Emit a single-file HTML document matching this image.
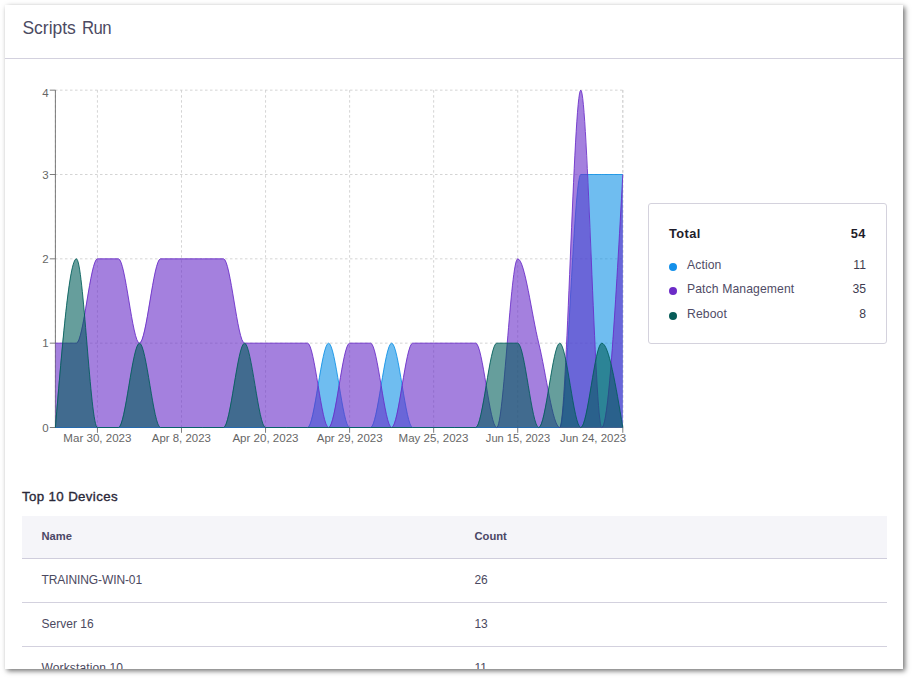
<!DOCTYPE html>
<html lang="en"><head><meta charset="utf-8"><title>Scripts Run</title>
<style>
*{box-sizing:border-box}
html,body{margin:0;padding:0;background:#fff;width:912px;height:678px;overflow:hidden}
body{font-family:"Liberation Sans",sans-serif;color:#4a4660;position:relative}
.card{position:absolute;left:5px;top:5px;width:898px;height:664px;background:#fff;box-shadow:2px 2px 5px rgba(0,0,0,.56);overflow:hidden}
.title{position:absolute;left:17.4px;top:13.4px;font-size:17.5px;line-height:20px;color:#4c4a62;font-weight:400;white-space:nowrap}
.title .w2{display:inline-block;transform:scaleX(.955);transform-origin:0 50%;letter-spacing:-.6px;margin-left:1px}
.hr{position:absolute;left:0;top:53px;width:898px;height:1px;background:#d3d1de}
svg.chart{position:absolute;left:-5px;top:-5px}
svg.chart text{font-family:"Liberation Sans",sans-serif;font-size:11.5px}
.legend{position:absolute;left:643px;top:198px;width:239px;height:141px;border:1px solid #d4d2dd;border-radius:3px;background:#fff}
.legend .row{position:absolute;left:0;width:100%;height:16px;line-height:16px;font-size:12.2px;letter-spacing:.1px;color:#504c66;white-space:nowrap}
.legend .row .lab{position:absolute;left:38px;top:0}
.legend .row .val{position:absolute;right:19.8px;top:0;text-align:right;color:#3e3b50}
.legend .row .dot{position:absolute;left:20px;top:5.5px;width:8px;height:8px;border-radius:50%}
.legend .tot{font-size:12.8px;letter-spacing:.4px;font-weight:700;color:#1f1d2b}
.legend .tot .lab{left:20px}
.legend .tot .val{color:#1f1d2b;right:20.2px}
h3{position:absolute;left:17px;top:484px;margin:0;font-size:13.3px;line-height:16px;font-weight:400;-webkit-text-stroke:.35px #2a2838;color:#2a2838;letter-spacing:.36px;white-space:nowrap}
.thead{position:absolute;left:17px;top:511px;width:865px;height:43px;background:#f5f5f9;border-bottom:1px solid #cfcddc}
.thead span,.tr span{position:absolute;white-space:nowrap}
.thead span{top:13px;font-size:11.2px;line-height:14px;font-weight:700;color:#4b4766}
.tr{position:absolute;left:17px;width:865px;height:44px;border-bottom:1px solid #d3d1de}
.tr span{top:13px;font-size:12px;line-height:16px;letter-spacing:-.1px;color:#4b4960}
.c1{left:19.5px}.c2{left:452.5px}
</style></head><body>
<div class="card">
<div class="title"><span class="w1">Scripts</span> <span class="w2">Run</span></div>
<div class="hr"></div>
<svg class="chart" width="912" height="678" viewBox="0 0 912 678">
<g stroke="#ccc" stroke-width="0.85" stroke-dasharray="2.5 2.5" fill="none"><line x1="55.0" y1="427.50" x2="622.8" y2="427.50"/><line x1="55.0" y1="343.17" x2="622.8" y2="343.17"/><line x1="55.0" y1="258.84" x2="622.8" y2="258.84"/><line x1="55.0" y1="174.50" x2="622.8" y2="174.50"/><line x1="55.0" y1="90.17" x2="622.8" y2="90.17"/><line x1="55.40" y1="90.17" x2="55.40" y2="427.5"/><line x1="97.43" y1="90.17" x2="97.43" y2="427.5"/><line x1="181.49" y1="90.17" x2="181.49" y2="427.5"/><line x1="265.55" y1="90.17" x2="265.55" y2="427.5"/><line x1="349.61" y1="90.17" x2="349.61" y2="427.5"/><line x1="433.67" y1="90.17" x2="433.67" y2="427.5"/><line x1="517.73" y1="90.17" x2="517.73" y2="427.5"/><line x1="622.80" y1="90.17" x2="622.80" y2="427.5"/><line x1="622.80" y1="90.17" x2="622.80" y2="427.5"/></g>
<g stroke="#666" stroke-width="0.85" fill="none"><line x1="55.4" y1="427.5" x2="622.8" y2="427.5"/><line x1="55.4" y1="90.17" x2="55.4" y2="427.5"/><line x1="97.43" y1="427.5" x2="97.43" y2="432.8"/><line x1="181.49" y1="427.5" x2="181.49" y2="432.8"/><line x1="265.55" y1="427.5" x2="265.55" y2="432.8"/><line x1="349.61" y1="427.5" x2="349.61" y2="432.8"/><line x1="433.67" y1="427.5" x2="433.67" y2="432.8"/><line x1="517.73" y1="427.5" x2="517.73" y2="432.8"/><line x1="622.80" y1="427.5" x2="622.80" y2="432.8"/><line x1="49.8" y1="427.50" x2="55.4" y2="427.50"/><line x1="49.8" y1="343.17" x2="55.4" y2="343.17"/><line x1="49.8" y1="258.84" x2="55.4" y2="258.84"/><line x1="49.8" y1="174.50" x2="55.4" y2="174.50"/><line x1="49.8" y1="90.17" x2="55.4" y2="90.17"/></g>
<g class="ticks" fill="#666" stroke="none"><text x="63.35" y="441.6" textLength="68.1" lengthAdjust="spacingAndGlyphs">Mar 30, 2023</text><text x="151.85" y="441.6" textLength="59.0" lengthAdjust="spacingAndGlyphs">Apr 8, 2023</text><text x="232.40" y="441.6" textLength="66.1" lengthAdjust="spacingAndGlyphs">Apr 20, 2023</text><text x="316.80" y="441.6" textLength="65.8" lengthAdjust="spacingAndGlyphs">Apr 29, 2023</text><text x="398.55" y="441.6" textLength="69.9" lengthAdjust="spacingAndGlyphs">May 25, 2023</text><text x="485.85" y="441.6" textLength="64.3" lengthAdjust="spacingAndGlyphs">Jun 15, 2023</text><text x="560.00" y="441.6" textLength="66.2" lengthAdjust="spacingAndGlyphs">Jun 24, 2023</text><text x="48.6" y="431.60" text-anchor="end">0</text><text x="48.6" y="347.27" text-anchor="end">1</text><text x="48.6" y="262.94" text-anchor="end">2</text><text x="48.6" y="178.60" text-anchor="end">3</text><text x="48.6" y="97.27" text-anchor="end">4</text></g>
<path d="M55.40,427.50C62.40,427.50,69.41,427.50,76.41,427.50C83.42,427.50,90.42,427.50,97.43,427.50C104.43,427.50,111.44,427.50,118.44,427.50C125.45,427.50,132.45,427.50,139.46,427.50C146.46,427.50,153.47,427.50,160.47,427.50C167.48,427.50,174.48,427.50,181.49,427.50C188.49,427.50,195.50,427.50,202.50,427.50C209.51,427.50,216.51,427.50,223.52,427.50C230.52,427.50,237.53,427.50,244.53,427.50C251.54,427.50,258.54,427.50,265.55,427.50C272.55,427.50,279.56,427.50,286.56,427.50C293.57,427.50,300.57,427.50,307.58,427.50C314.58,427.50,321.59,343.17,328.59,343.17C335.60,343.17,342.60,427.50,349.61,427.50C356.61,427.50,363.62,427.50,370.62,427.50C377.63,427.50,384.63,343.17,391.64,343.17C398.64,343.17,405.65,427.50,412.65,427.50C419.66,427.50,426.66,427.50,433.67,427.50C440.67,427.50,447.68,427.50,454.68,427.50C461.69,427.50,468.69,427.50,475.70,427.50C482.70,427.50,489.71,427.50,496.71,427.50C503.72,427.50,510.72,427.50,517.73,427.50C524.73,427.50,531.74,427.50,538.74,427.50C545.75,427.50,552.75,427.50,559.76,427.50C566.76,427.50,573.77,174.50,580.77,174.50C587.78,174.50,594.78,174.50,601.79,174.50C608.79,174.50,615.80,174.50,622.80,174.50L622.80,427.50 L55.40,427.50 Z" fill="#0F91E6" fill-opacity="0.6" stroke="none"/>
<path d="M55.40,427.50C62.40,427.50,69.41,427.50,76.41,427.50C83.42,427.50,90.42,427.50,97.43,427.50C104.43,427.50,111.44,427.50,118.44,427.50C125.45,427.50,132.45,427.50,139.46,427.50C146.46,427.50,153.47,427.50,160.47,427.50C167.48,427.50,174.48,427.50,181.49,427.50C188.49,427.50,195.50,427.50,202.50,427.50C209.51,427.50,216.51,427.50,223.52,427.50C230.52,427.50,237.53,427.50,244.53,427.50C251.54,427.50,258.54,427.50,265.55,427.50C272.55,427.50,279.56,427.50,286.56,427.50C293.57,427.50,300.57,427.50,307.58,427.50C314.58,427.50,321.59,343.17,328.59,343.17C335.60,343.17,342.60,427.50,349.61,427.50C356.61,427.50,363.62,427.50,370.62,427.50C377.63,427.50,384.63,343.17,391.64,343.17C398.64,343.17,405.65,427.50,412.65,427.50C419.66,427.50,426.66,427.50,433.67,427.50C440.67,427.50,447.68,427.50,454.68,427.50C461.69,427.50,468.69,427.50,475.70,427.50C482.70,427.50,489.71,427.50,496.71,427.50C503.72,427.50,510.72,427.50,517.73,427.50C524.73,427.50,531.74,427.50,538.74,427.50C545.75,427.50,552.75,427.50,559.76,427.50C566.76,427.50,573.77,174.50,580.77,174.50C587.78,174.50,594.78,174.50,601.79,174.50C608.79,174.50,615.80,174.50,622.80,174.50" fill="none" stroke="#0F91E6" stroke-width="0.85"/>

<path d="M55.40,343.17C62.40,343.17,69.41,343.17,76.41,343.17C83.42,343.17,90.42,258.84,97.43,258.84C104.43,258.84,111.44,258.84,118.44,258.84C125.45,258.84,132.45,343.17,139.46,343.17C146.46,343.17,153.47,258.84,160.47,258.84C167.48,258.84,174.48,258.84,181.49,258.84C188.49,258.84,195.50,258.84,202.50,258.84C209.51,258.84,216.51,258.84,223.52,258.84C230.52,258.84,237.53,343.17,244.53,343.17C251.54,343.17,258.54,343.17,265.55,343.17C272.55,343.17,279.56,343.17,286.56,343.17C293.57,343.17,300.57,343.17,307.58,343.17C314.58,343.17,321.59,427.50,328.59,427.50C335.60,427.50,342.60,343.17,349.61,343.17C356.61,343.17,363.62,343.17,370.62,343.17C377.63,343.17,384.63,427.50,391.64,427.50C398.64,427.50,405.65,343.17,412.65,343.17C419.66,343.17,426.66,343.17,433.67,343.17C440.67,343.17,447.68,343.17,454.68,343.17C461.69,343.17,468.69,343.17,475.70,343.17C482.70,343.17,489.71,427.50,496.71,427.50C503.72,427.50,510.72,258.84,517.73,258.84C524.73,258.84,531.74,315.06,538.74,343.17C545.75,371.28,552.75,427.50,559.76,427.50C566.76,427.50,573.77,90.17,580.77,90.17C587.78,90.17,594.78,427.50,601.79,427.50C608.79,427.50,615.80,301.00,622.80,174.50L622.80,427.50 L55.40,427.50 Z" fill="#682BC8" fill-opacity="0.6" stroke="none"/>
<path d="M55.40,343.17C62.40,343.17,69.41,343.17,76.41,343.17C83.42,343.17,90.42,258.84,97.43,258.84C104.43,258.84,111.44,258.84,118.44,258.84C125.45,258.84,132.45,343.17,139.46,343.17C146.46,343.17,153.47,258.84,160.47,258.84C167.48,258.84,174.48,258.84,181.49,258.84C188.49,258.84,195.50,258.84,202.50,258.84C209.51,258.84,216.51,258.84,223.52,258.84C230.52,258.84,237.53,343.17,244.53,343.17C251.54,343.17,258.54,343.17,265.55,343.17C272.55,343.17,279.56,343.17,286.56,343.17C293.57,343.17,300.57,343.17,307.58,343.17C314.58,343.17,321.59,427.50,328.59,427.50C335.60,427.50,342.60,343.17,349.61,343.17C356.61,343.17,363.62,343.17,370.62,343.17C377.63,343.17,384.63,427.50,391.64,427.50C398.64,427.50,405.65,343.17,412.65,343.17C419.66,343.17,426.66,343.17,433.67,343.17C440.67,343.17,447.68,343.17,454.68,343.17C461.69,343.17,468.69,343.17,475.70,343.17C482.70,343.17,489.71,427.50,496.71,427.50C503.72,427.50,510.72,258.84,517.73,258.84C524.73,258.84,531.74,315.06,538.74,343.17C545.75,371.28,552.75,427.50,559.76,427.50C566.76,427.50,573.77,90.17,580.77,90.17C587.78,90.17,594.78,427.50,601.79,427.50C608.79,427.50,615.80,301.00,622.80,174.50" fill="none" stroke="#682BC8" stroke-width="0.85"/>

<path d="M55.40,427.50C62.40,343.17,69.41,258.84,76.41,258.84C83.42,258.84,90.42,427.50,97.43,427.50C104.43,427.50,111.44,427.50,118.44,427.50C125.45,427.50,132.45,343.17,139.46,343.17C146.46,343.17,153.47,427.50,160.47,427.50C167.48,427.50,174.48,427.50,181.49,427.50C188.49,427.50,195.50,427.50,202.50,427.50C209.51,427.50,216.51,427.50,223.52,427.50C230.52,427.50,237.53,343.17,244.53,343.17C251.54,343.17,258.54,427.50,265.55,427.50C272.55,427.50,279.56,427.50,286.56,427.50C293.57,427.50,300.57,427.50,307.58,427.50C314.58,427.50,321.59,427.50,328.59,427.50C335.60,427.50,342.60,427.50,349.61,427.50C356.61,427.50,363.62,427.50,370.62,427.50C377.63,427.50,384.63,427.50,391.64,427.50C398.64,427.50,405.65,427.50,412.65,427.50C419.66,427.50,426.66,427.50,433.67,427.50C440.67,427.50,447.68,427.50,454.68,427.50C461.69,427.50,468.69,427.50,475.70,427.50C482.70,427.50,489.71,343.17,496.71,343.17C503.72,343.17,510.72,343.17,517.73,343.17C524.73,343.17,531.74,427.50,538.74,427.50C545.75,427.50,552.75,343.17,559.76,343.17C566.76,343.17,573.77,427.50,580.77,427.50C587.78,427.50,594.78,343.17,601.79,343.17C608.79,343.17,615.80,385.33,622.80,427.50L622.80,427.50 L55.40,427.50 Z" fill="#005D5A" fill-opacity="0.6" stroke="none"/>
<path d="M55.40,427.50C62.40,343.17,69.41,258.84,76.41,258.84C83.42,258.84,90.42,427.50,97.43,427.50C104.43,427.50,111.44,427.50,118.44,427.50C125.45,427.50,132.45,343.17,139.46,343.17C146.46,343.17,153.47,427.50,160.47,427.50C167.48,427.50,174.48,427.50,181.49,427.50C188.49,427.50,195.50,427.50,202.50,427.50C209.51,427.50,216.51,427.50,223.52,427.50C230.52,427.50,237.53,343.17,244.53,343.17C251.54,343.17,258.54,427.50,265.55,427.50C272.55,427.50,279.56,427.50,286.56,427.50C293.57,427.50,300.57,427.50,307.58,427.50C314.58,427.50,321.59,427.50,328.59,427.50C335.60,427.50,342.60,427.50,349.61,427.50C356.61,427.50,363.62,427.50,370.62,427.50C377.63,427.50,384.63,427.50,391.64,427.50C398.64,427.50,405.65,427.50,412.65,427.50C419.66,427.50,426.66,427.50,433.67,427.50C440.67,427.50,447.68,427.50,454.68,427.50C461.69,427.50,468.69,427.50,475.70,427.50C482.70,427.50,489.71,343.17,496.71,343.17C503.72,343.17,510.72,343.17,517.73,343.17C524.73,343.17,531.74,427.50,538.74,427.50C545.75,427.50,552.75,343.17,559.76,343.17C566.76,343.17,573.77,427.50,580.77,427.50C587.78,427.50,594.78,343.17,601.79,343.17C608.79,343.17,615.80,385.33,622.80,427.50" fill="none" stroke="#005D5A" stroke-width="0.85"/>

</svg>
<div class="legend">
 <div class="row tot" style="top:21.5px"><span class="lab">Total</span><span class="val">54</span></div>
 <div class="row" style="top:53px"><i class="dot" style="background:#1490EA"></i><span class="lab">Action</span><span class="val">11</span></div>
 <div class="row" style="top:77px"><i class="dot" style="background:#6C2BC7"></i><span class="lab">Patch Management</span><span class="val">35</span></div>
 <div class="row" style="top:102px"><i class="dot" style="background:#075C58"></i><span class="lab">Reboot</span><span class="val">8</span></div>
</div>
<h3>Top 10 Devices</h3>
<div class="thead"><span class="c1">Name</span><span class="c2">Count</span></div>
<div class="tr" style="top:554px"><span class="c1">TRAINING-WIN-01</span><span class="c2">26</span></div>
<div class="tr" style="top:598px"><span class="c1" style="letter-spacing:.02px">Server 16</span><span class="c2">13</span></div>
<div class="tr" style="top:642px"><span class="c1" style="letter-spacing:.13px">Workstation 10</span><span class="c2">11</span></div>
</div>
</body></html>
